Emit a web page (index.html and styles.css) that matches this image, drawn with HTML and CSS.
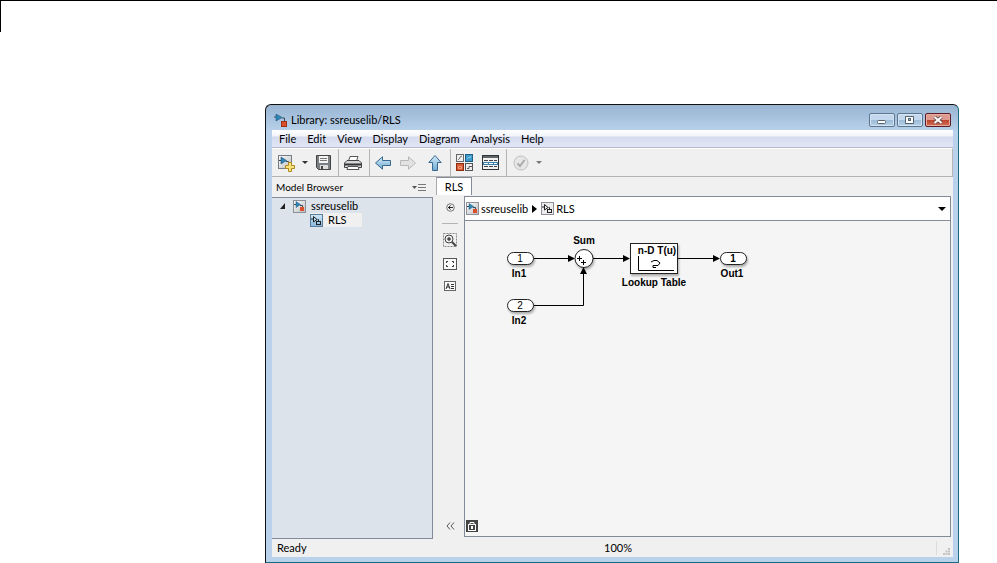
FILE: index.html
```
<!DOCTYPE html>
<html lang="en">
<head>
    <meta charset="UTF-8">
    <meta name="viewport" content="width=device-width, initial-scale=1.0">
    <title>Library: ssreuselib/RLS</title>
    <link rel="stylesheet" href="styles.css">
</head>
<body>

    <!-- shared icons -->
    <svg class="defs" width="0" height="0" aria-hidden="true">
        <defs>
            <linearGradient id="blueFill" x1="0" y1="0" x2="0" y2="1">
                <stop offset="0" stop-color="#d6ecf8"/>
                <stop offset="1" stop-color="#6ea9d2"/>
            </linearGradient>
            <linearGradient id="silver" x1="0" y1="0" x2="1" y2="1">
                <stop offset="0" stop-color="#ffffff"/>
                <stop offset="1" stop-color="#b9bcc0"/>
            </linearGradient>
            <symbol id="model" viewBox="0 0 13 13">
                <path d="M0 3H3M8 4H10.5V8" fill="none" stroke="#3b4a58"/>
                <path d="M2 0L8 3.5L2 7Z" fill="#2f86b8" stroke="#1d5478" stroke-width=".6"/>
                <rect x="7.5" y="7.5" width="5" height="5" fill="#d9502a" stroke="#9c3216"/>
            </symbol>
            <symbol id="model-box" viewBox="0 0 13 13">
                <rect x=".5" y=".5" width="12" height="12" fill="url(#silver)" stroke="#8d9096"/>
                <path d="M1 4.5H3M7 5.5H9.500V7" fill="none" stroke="#3b4a58"/>
                <path d="M3 1.5L7.5 4.5L3 7.5Z" fill="#2f86b8" stroke="#1d5478" stroke-width=".5"/>
                <rect x="7" y="7" width="4" height="4" fill="#d9502a"/>
            </symbol>
            <symbol id="subsystem" viewBox="0 0 11 11">
                <path d="M0 4H2M6.500 4.500H7.500V6" fill="none" stroke="#222"/>
                <path d="M2.500 1.500L6 4.500L2.500 7Z" fill="none" stroke="#222"/>
                <rect x="5.500" y="6.500" width="4" height="3" fill="none" stroke="#222"/>
            </symbol>
        </defs>
    </svg>

    <div class="page-corner"></div>

    <main class="window">
        <header class="titlebar">
            <svg class="app-icon" width="13" height="13"><use href="#model"/></svg>
            <h1>Library: ssreuselib/RLS</h1>
            <div class="window-buttons">
                <button class="win-btn" aria-label="Minimize">
                    <svg width="10" height="8"><rect x=".5" y="4.500" width="8" height="3" rx="1" fill="#fff" stroke="#53606e"/></svg>
                </button>
                <button class="win-btn" aria-label="Maximize">
                    <svg width="10" height="8"><path d="M.5.5H8.500V7.500H.5Z" fill="#fff" stroke="#53606e"/><rect x="3.500" y="2.500" width="2" height="2" fill="#a5c0dc" stroke="#53606e"/></svg>
                </button>
                <button class="win-btn close" aria-label="Close">
                    <svg width="10" height="8"><path d="M1.500 1L8.500 7M8.500 1L1.500 7" stroke="#5d4648" stroke-width="3.600"/><path d="M1.500 1L8.500 7M8.500 1L1.500 7" stroke="#fff" stroke-width="2"/></svg>
                </button>
            </div>
        </header>

        <div class="client">
            <nav class="menubar">
                <button>File</button>
                <button>Edit</button>
                <button>View</button>
                <button>Display</button>
                <button>Diagram</button>
                <button>Analysis</button>
                <button>Help</button>
            </nav>

            <div class="toolbar">
                <div class="group">
                    <button aria-label="New model">
                        <svg width="18" height="18">
                            <rect x="1.500" y="1.500" width="13" height="13" fill="url(#silver)" stroke="#777c82"/>
                            <path d="M2 6.500H5M9 7.500H11.500V11" fill="none" stroke="#3b4a58"/>
                            <path d="M4 3L9.500 6.500L4 10Z" fill="#2f86b8" stroke="#174b6d" stroke-width=".6"/>
                            <path d="M11.500 8.500H14.500V11.500H17.500V14.500H14.500V17.500H11.500V14.500H8.500V11.500H11.500Z" fill="#fbe27c" stroke="#b08a1d"/>
                        </svg>
                    </button>
                    <button class="arrow" aria-label="New model options"><svg width="6" height="3"><path d="M0 0H6L3 3Z" fill="#333"/></svg></button>
                    <button class="save" aria-label="Save">
                        <svg width="15" height="15">
                            <path d="M.5 .5H14.500V14.500H2.500L.5 12.500Z" fill="#7c7f82" stroke="#444"/>
                            <rect x="3" y="1" width="9" height="7" fill="#f4f4f4"/>
                            <path d="M4 3.500H11M4 5.500H11" stroke="#777"/>
                            <rect x="4" y="10" width="8" height="4" fill="#ddd"/>
                            <rect x="5" y="11" width="2" height="3" fill="#444"/>
                        </svg>
                    </button>
                </div>
                <div class="group">
                    <button aria-label="Print">
                        <svg width="18" height="14">
                            <path d="M4.500 5L6 .5H14L12.500 5" fill="#fff" stroke="#555"/>
                            <path d="M3 4.500H15L17.500 7V11.500H.5V7Z" fill="#d5d8da" stroke="#444"/>
                            <path d="M1 8.500H17" stroke="#333" stroke-width="2"/>
                            <path d="M4 10.500H14L15 13.500H3Z" fill="#fff" stroke="#555"/>
                        </svg>
                    </button>
                </div>
                <div class="group nav">
                    <button aria-label="Back">
                        <svg width="16" height="14"><path d="M.5 7L7.500 .8V4.500H15.500V9.500H7.500V13.200Z" fill="url(#blueFill)" stroke="#38688f"/></svg>
                    </button>
                    <button class="forward" aria-label="Forward" disabled>
                        <svg width="16" height="14"><path d="M15.500 7L8.500 .8V4.500H.5V9.500H8.500V13.200Z" fill="#e2e2e2" stroke="#b8b8b8"/></svg>
                    </button>
                    <button class="up" aria-label="Up to parent">
                        <svg width="14" height="16"><path d="M7 .5L13.200 7.500H9.500V15.500H4.500V7.500H.8Z" fill="url(#blueFill)" stroke="#38688f"/></svg>
                    </button>
                </div>
                <div class="group">
                    <button aria-label="Library browser">
                        <svg width="18" height="18">
                            <rect x=".5" y=".5" width="7" height="7" fill="#eee" stroke="#666"/>
                            <path d="M2 6L4 4L4 3L6 2" fill="none" stroke="#777"/>
                            <rect x="9.500" y=".5" width="7" height="7" fill="#3c9bcb" stroke="#1f5f88"/>
                            <path d="M11 5L13 3L14 4L15 2" fill="none" stroke="#8fcbe8"/>
                            <rect x=".5" y="9.500" width="7" height="7" fill="#dc5a32" stroke="#8e2c12"/>
                            <path d="M2.500 12.500H5.500V14.500H2.500Z" fill="none" stroke="#f09a7c"/>
                            <rect x="9.500" y="9.500" width="7" height="7" fill="#eee" stroke="#555"/>
                            <path d="M11 14.500H13V12.500H16" fill="none" stroke="#555"/>
                        </svg>
                    </button>
                    <button class="explorer" aria-label="Model explorer">
                        <svg width="17" height="15">
                            <rect x=".5" y=".5" width="16" height="14" fill="#f2f2f2" stroke="#2f3439"/>
                            <rect x="1" y="1" width="15" height="2" fill="#5d656b"/>
                            <path d="M2 5.500H15M2 11.500H15" stroke="#444" stroke-dasharray="4 1"/>
                            <rect x="1" y="7" width="15" height="3" fill="#3b82ad"/>
                            <path d="M2 8.500H15" stroke="#fff" stroke-dasharray="4 1"/>
                        </svg>
                    </button>
                </div>
                <div class="group">
                    <button aria-label="Check model" disabled>
                        <svg width="16" height="16">
                            <circle cx="8" cy="8" r="7" fill="#e6e6e6" stroke="#c0c0c0"/>
                            <path d="M4.500 8.500L7 11L11.500 5" fill="none" stroke="#aaa" stroke-width="2"/>
                        </svg>
                    </button>
                    <button class="arrow" aria-label="Check options"><svg width="6" height="3"><path d="M0 0H6L3 3Z" fill="#777"/></svg></button>
                </div>
            </div>

            <div class="workspace">
                <aside class="browser">
                    <div class="browser-head">
                        <h2>Model Browser</h2>
                        <button aria-label="Browser options">
                            <svg width="14" height="7"><path d="M0 2H5L2.500 5Z" fill="#555"/><path d="M6 .5H14M6 3.500H14M6 6.500H14" stroke="#777"/></svg>
                        </button>
                    </div>
                    <ul class="tree">
                        <li>
                            <div class="row">
                                <svg class="twisty" width="5" height="6"><path d="M5 0V6H0Z" fill="#222"/></svg>
                                <svg width="13" height="13"><use href="#model-box"/></svg>
                                <span>ssreuselib</span>
                            </div>
                            <ul>
                                <li>
                                    <div class="row selected">
                                        <svg class="picked" width="13" height="13"><use href="#subsystem" width="11" height="11"/></svg>
                                        <span>RLS</span>
                                    </div>
                                </li>
                            </ul>
                        </li>
                    </ul>
                </aside>

                <section class="editor">
                    <div class="tabs"><button class="tab">RLS</button></div>
                    <div class="editor-body">
                        <div class="palette">
                            <button aria-label="Hide explorer bar">
                                <svg width="9" height="9"><circle cx="4.500" cy="4.500" r="3.800" fill="#eee" stroke="#777"/><path d="M2 4.500H7M4.500 2.500L2.500 4.500L4.500 6.500" fill="none" stroke="#222"/></svg>
                            </button>
                            <hr>
                            <button aria-label="Zoom">
                                <svg width="14" height="14"><rect x=".5" y=".5" width="13" height="13" fill="none" stroke="#888" stroke-dasharray="2 1"/><circle cx="6" cy="6" r="4" fill="#eee" stroke="#444"/><path d="M4 6H8M6 4V8" stroke="#111"/><path d="M9 9L13 13" stroke="#444" stroke-width="2"/></svg>
                            </button>
                            <button aria-label="Fit to view">
                                <svg width="14" height="12"><rect x=".5" y=".5" width="13" height="11" fill="#fafafa" stroke="#555"/><path d="M3.500 5V3.500H5M9 3.500H10.500V5M10.500 7V8.500H9M5 8.500H3.500V7" fill="none" stroke="#333"/></svg>
                            </button>
                            <button aria-label="Annotation">
                                <svg width="12" height="10"><rect x=".5" y=".5" width="11" height="9" fill="#fafafa" stroke="#666"/><path d="M2 8L4 2.500L6 8M3 6H5.500M7 3.500H10M7 5.500H10M7 7.500H10" fill="none" stroke="#333"/></svg>
                            </button>
                            <button class="collapse" aria-label="Collapse palette">
                                <svg width="9" height="8"><path d="M4 .5L1 4L4 7.500M8 .5L5 4L8 7.500" fill="none" stroke="#555"/></svg>
                            </button>
                        </div>

                        <div class="stage">
                            <div class="breadcrumb">
                                <svg width="13" height="13"><use href="#model-box"/></svg>
                                <a href="#">ssreuselib</a>
                                <svg class="sep" width="5" height="8"><path d="M0 0L5 4L0 8Z" fill="#000"/></svg>
                                <svg class="boxed" width="13" height="13"><use href="#subsystem" width="11" height="11"/></svg>
                                <a href="#">RLS</a>
                                <button class="history" aria-label="Location history"><svg width="8" height="4"><path d="M0 0H8L4 4Z" fill="#000"/></svg></button>
                            </div>
                            <div class="canvas">
                                <svg class="diagram" width="300" height="110" role="img" aria-label="RLS diagram">
                                    <g class="shape">
                                        <rect x="42.500" y="31.500" width="26" height="12" rx="6"/>
                                        <rect x="42.500" y="78.500" width="26" height="12" rx="6"/>
                                        <circle cx="119" cy="37.500" r="9"/>
                                        <rect x="165.500" y="22.500" width="47" height="30"/>
                                        <rect x="255.500" y="31.500" width="26" height="12" rx="6"/>
                                    </g>
                                    <g class="wire">
                                        <path d="M69 37.500H105M128 37.500H160M213 37.500H250M69 84.500H118.500V52"/>
                                        <path d="M173.500 35V49.500H209"/>
                                        <path d="M186 41L189 39.500H192L195 42L193 44.500H188V46.500H191"/>
                                    </g>
                                    <path class="heads" d="M103 34L110 37.500L103 41ZM158 34L165 37.500L158 41ZM248 34L255 37.500L248 41ZM115 53L118.500 46L122 53Z"/>
                                    <g class="plus"><path d="M112 37.500H117M114.500 35V40M116 41.500H121M118.500 39V44"/></g>
                                    <g class="value">
                                        <text x="55" y="41">1</text>
                                        <text x="55" y="88">2</text>
                                        <text class="bold" x="268" y="41">1</text>
                                        <text class="bold" x="192" y="33">n-D T(u)</text>
                                    </g>
                                    <g class="name">
                                        <text x="119" y="23">Sum</text>
                                        <text x="54" y="56">In1</text>
                                        <text x="54" y="103">In2</text>
                                        <text x="189" y="65">Lookup Table</text>
                                        <text x="267" y="56">Out1</text>
                                    </g>
                                </svg>
                                <svg class="lock" width="12" height="12"><rect width="12" height="12" fill="#444"/><path d="M4 4.500V2.500H8V4.500" fill="none" stroke="#fff"/><rect x="2.500" y="4.500" width="7" height="6" fill="#444" stroke="#fff"/><rect x="5" y="6" width="2" height="3" fill="#fff"/></svg>
                            </div>
                        </div>
                    </div>
                </section>
            </div>

            <footer class="statusbar">
                <span>Ready</span>
                <span>100%</span>
                <div class="grip">
                    <svg width="7" height="7"><path d="M5 0H7V2H5ZM2.500 2.500H4.500V4.500H2.500ZM5 2.500H7V4.500H5ZM0 5H2V7H0ZM2.500 5H4.500V7H2.500ZM5 5H7V7H5Z" fill="#c4c4c4"/></svg>
                </div>
            </footer>
        </div>
    </main>

</body>
</html>
```
FILE: styles.css
```
* {
    box-sizing: border-box;
}

body {
    display: flex;
    flex-direction: column;
    min-height: 100vh;
    margin: 0;
    background: #fff;
    color: #000;
    font-family: Lato, "Open Sans", sans-serif;
    font-size: 11px;
    line-height: 14px;
}

h1, h2 {
    margin: 0;
    font-size: 11px;
    font-weight: normal;
}

h2 {
    font-size: 10px;
}

ul {
    margin: 0;
    padding: 0;
    list-style: none;
}

a {
    color: inherit;
    text-decoration: none;
}

button {
    display: flex;
    align-items: center;
    justify-content: center;
    padding: 0;
    border: none;
    background: none;
    color: inherit;
    font: inherit;
}

svg {
    display: block;
    flex: none;
}

.defs {
    position: absolute;
}

.page-corner {
    height: 32px;
    border-top: 1px solid #000;
    border-left: 1px solid #000;
}

/* window frame */
.window {
    display: flex;
    flex: 1;
    flex-direction: column;
    margin: 72px 38px 0 265px;
    padding: 0 5px 5px 6px;
    border: 1px solid #111;
    border-right-color: #176a80;
    border-bottom-color: #176a80;
    border-radius: 6px 6px 0 0;
    background: linear-gradient(#98b4d2, #b9d1ea 26px);
}

.titlebar {
    display: flex;
    gap: 4px;
    height: 25px;
    padding: 0 2px;
}

.app-icon {
    margin-top: 9px;
}

.titlebar h1 {
    margin-top: 8px;
}

.window-buttons {
    display: flex;
    gap: 2px;
    margin: 8px 0 0 auto;
}

.win-btn {
    width: 26px;
    height: 14px;
    border: 1px solid #5c7590;
    border-radius: 2px;
    background: linear-gradient(#c3d8ec 50%, #9dbad7 50%, #b4d0e8);
    box-shadow: inset 0 0 0 1px #d3e3f2;
}

.win-btn.close {
    border-color: #5d1d22;
    background: linear-gradient(#dd9a8d 50%, #bd412c 50%, #d1715a);
    box-shadow: inset 0 0 0 1px #e5aaa0;
}

.client {
    display: flex;
    flex: 1;
    flex-direction: column;
    background: #f0f0f0;
}

/* menu */
.menubar {
    display: flex;
    gap: 11px;
    height: 18px;
    padding: 0 7px;
    border-bottom: 1px solid #b5b9cc;
    background: linear-gradient(#fff, #f2f4fb 6px, #d5dbee 7px, #e2e7f6);
}

/* toolbar */
.toolbar {
    display: flex;
    height: 29px;
    border: 1px solid #b4b4b4;
    border-top-color: #fff;
    border-left: none;
}

.group {
    display: flex;
    align-items: center;
    padding: 0 7px 0 5px;
    border-right: 1px solid #b4b4b4;
}

.group.nav {
    padding-right: 8px;
}

.group:last-child {
    padding-left: 6px;
    border-right: none;
}

.arrow {
    margin-left: 7px;
}

.save {
    margin-left: 8px;
}

.forward {
    margin-left: 9px;
}

.up {
    margin-left: 12px;
}

.explorer {
    margin-left: 8px;
}

.workspace {
    display: flex;
    flex: 1;
}

/* model browser */
.browser {
    display: flex;
    flex-direction: column;
    width: 161px;
}

.browser-head {
    display: flex;
    align-items: center;
    justify-content: space-between;
    height: 20px;
    padding: 0 7px 0 4px;
}

.tree {
    flex: 1;
    padding-top: 1px;
    border: 1px solid #838b98;
    border-left: none;
    background: #dce3eb;
}

.row {
    display: flex;
    align-items: center;
    gap: 5px;
    height: 14px;
    padding-left: 8px;
}

.row .twisty {
    margin-right: 3px;
}

.row.selected {
    width: 52px;
    margin-left: 38px;
    padding-left: 0;
    background: #f0f0f0;
}

.picked {
    border: 1px solid #5b7d9c;
    background: linear-gradient(#cfe6f8, #8ab8dc);
}

/* editor */
.editor {
    display: flex;
    flex: 1;
    flex-direction: column;
    padding: 0 2px 2px 3px;
}

.tabs {
    height: 19px;
}

.tab {
    width: 36px;
    height: 18px;
    border: 1px solid #838b98;
    border-bottom: none;
    border-left-color: #aaa;
    background: #fff;
}

.editor-body {
    display: flex;
    flex: 1;
}

.palette {
    display: flex;
    flex-direction: column;
    align-items: center;
    gap: 11px;
    width: 28px;
    padding: 7px 0;
}

.palette hr {
    width: 16px;
    margin: 0 0 -2px;
    border: none;
    border-top: 1px solid #b4b4b4;
}

.palette .collapse {
    margin-top: auto;
}

.stage {
    display: flex;
    flex: 1;
    flex-direction: column;
    border: 1px solid #838b98;
}

.breadcrumb {
    display: flex;
    align-items: center;
    gap: 2px;
    height: 24px;
    padding: 0 4px 0 1px;
    border-bottom: 1px solid #838b98;
    background: #fff;
}

.breadcrumb .sep {
    margin: 0 2px;
}

.boxed {
    border: 1px solid #8d9096;
    background: #ececec;
}

.history {
    margin-left: auto;
}

.canvas {
    display: flex;
    flex: 1;
    flex-direction: column;
    justify-content: space-between;
    padding: 0 0 4px 1px;
    background: #f5f5f5;
}

/* diagram */
.diagram {
    margin-left: -1px;
    font-family: "Liberation Sans", Arial, sans-serif;
    font-size: 10px;
    text-anchor: middle;
}

.shape {
    fill: #fff;
    stroke: #222;
    filter: drop-shadow(1px 2px 1px rgba(0, 0, 0, 0.3));
}

.wire,
.plus {
    fill: none;
    stroke: #000;
}

.bold,
.name {
    font-weight: bold;
}

/* status */
.statusbar {
    display: grid;
    grid-template-columns: 327px 1fr auto;
    align-items: center;
    height: 18px;
    padding-left: 5px;
}

.grip {
    display: flex;
    align-items: flex-end;
    justify-content: flex-end;
    width: 17px;
    height: 14px;
    padding-right: 3px;
    border-left: 1px solid #dcdcdc;
}
```
